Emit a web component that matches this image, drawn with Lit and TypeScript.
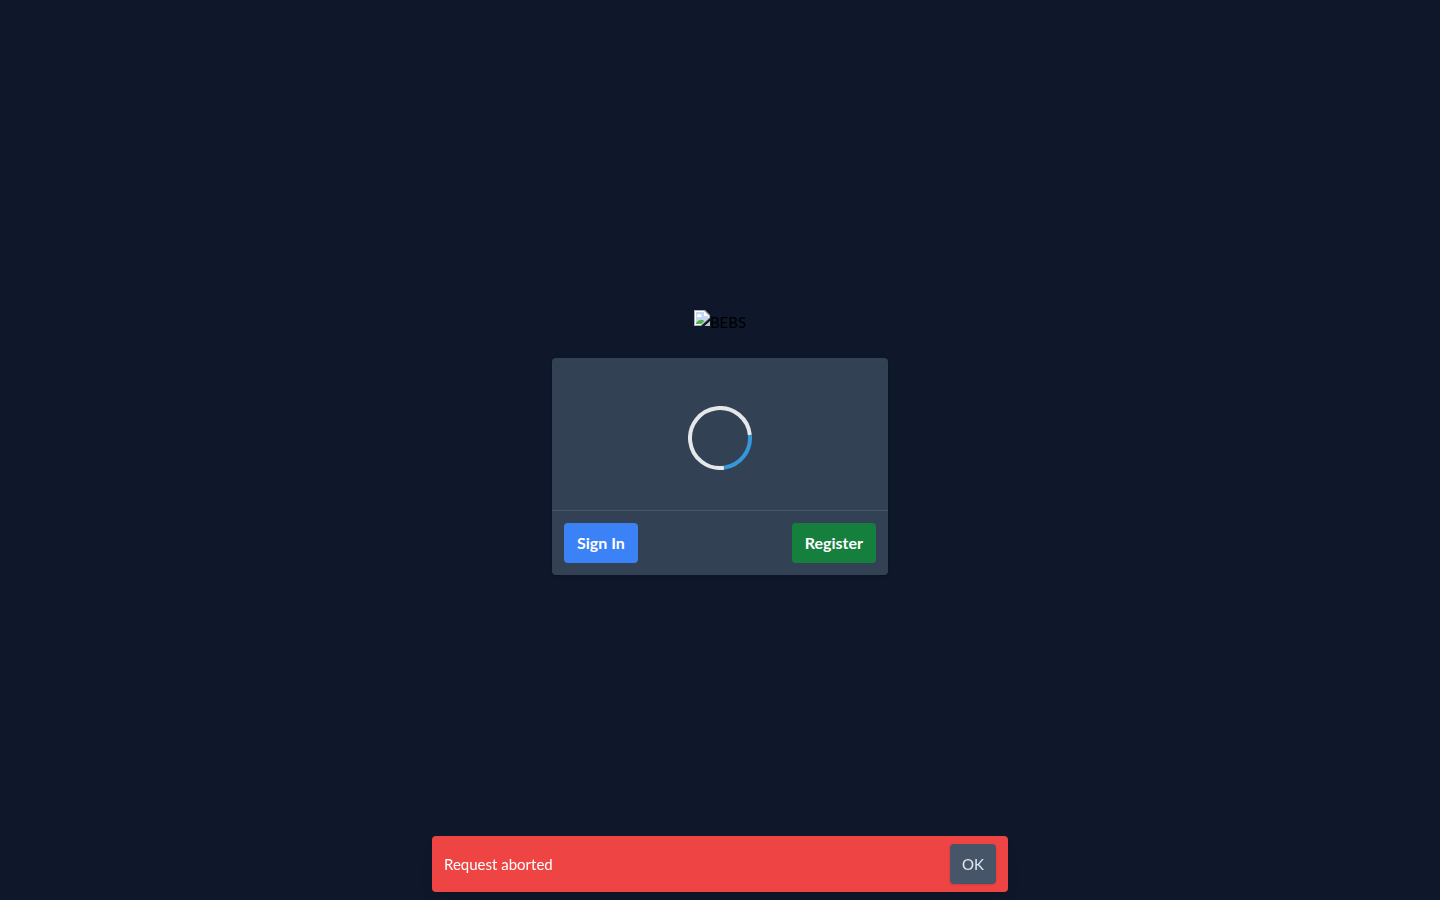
import { LitElement, html, css } from "lit";
import { customElement, state } from "lit/decorators.js";

@customElement("app-root")
export class AppRoot extends LitElement {
  @state() private notice = "Request aborted";

  static styles = css`
    :host {
      display: flex;
      flex-direction: column;
      align-items: center;
      justify-content: center;
      box-sizing: border-box;
      min-height: 100vh;
      padding: 8px 8px 23px;
      background: #0f172a;
      color: #000;
      font: 15px/24px Lato, "Liberation Sans", sans-serif;
    }
    .logo {
      display: flex;
      align-items: flex-start;
      margin-bottom: 24px;
    }
    .logo svg {
      display: block;
      flex: none;
    }
    .card {
      width: 336px;
      max-width: 100%;
      border-radius: 4px;
      background: #334155;
      box-shadow: 0 1px 3px rgb(0 0 0 / 0.1), 0 1px 2px -1px rgb(0 0 0 / 0.1);
    }
    .loading {
      display: flex;
      justify-content: center;
      padding: 48px 12px 40px;
    }
    .loading svg {
      display: block;
    }
    .actions {
      display: flex;
      justify-content: space-between;
      padding: 12px;
      border-top: 1px solid #475569;
    }
    button {
      border: 0;
      border-radius: 4px;
      padding: 8px 12px;
      color: #fff;
      font: inherit;
      cursor: pointer;
    }
    .sign-in,
    .register {
      padding: 8px 13px;
      font-size: 16px;
      font-weight: 700;
    }
    .sign-in {
      background: #3b82f6;
    }
    .register {
      background: #15803d;
    }
    .toast {
      position: fixed;
      bottom: 8px;
      left: 30%;
      right: 30%;
      display: flex;
      align-items: center;
      justify-content: space-between;
      padding: 8px 12px;
      border-radius: 4px;
      background: #ef4444;
      color: #fff;
      box-shadow: 0 10px 15px -3px rgb(0 0 0 / 0.1), 0 4px 6px -4px rgb(0 0 0 / 0.1);
    }
    .dismiss {
      background: #475569;
      color: #e2e8f0;
      box-shadow: 0 1px 3px rgb(0 0 0 / 0.1), 0 1px 2px -1px rgb(0 0 0 / 0.1);
    }
  `;

  render() {
    return html`
      <div class="logo">
        <svg width="16" height="16" viewBox="0 0 16 16" aria-hidden="true">
          <path d="M0 0H11L16 5V8L7 16H0Z" fill="#a9adb2" />
          <path d="M1 1H10V6H15V7.500L6.500 15H1Z" fill="#fff" />
          <path d="M2 2H10V6H14V8.500L7 14H2Z" fill="#c5d7f5" />
          <path d="M3 7a1.500 1.500 0 0 1 .500-2a2 2 0 0 1 3.500 0a1.500 1.500 0 0 1 .500 2Z" fill="#fff" />
          <path d="M2 14V13Q6 7.500 10.500 11L7 14Z" fill="#52b043" />
          <path d="M10 1L15 6H10Z" fill="#fff" />
          <path d="M16 11V16H10.500Z" fill="#c3c6ca" />
        </svg>
        <span>BEBS</span>
      </div>
      <main class="card">
        <div class="loading" role="status" aria-label="Loading">
          <svg width="64" height="64" viewBox="0 0 64 64" fill="none" stroke-width="4">
            <path d="M36 61.730A30 30 0 1 1 61.850 29" stroke="#e5e7eb" />
            <path d="M61.850 29A30 30 0 0 1 36 61.730" stroke="#3498db" />
          </svg>
        </div>
        <div class="actions">
          <button class="sign-in" type="button">Sign In</button>
          <button class="register" type="button">Register</button>
        </div>
      </main>
      ${this.notice
        ? html`<div class="toast" role="alert">
            <span>${this.notice}</span>
            <button class="dismiss" type="button" @click=${() => (this.notice = "")}>OK</button>
          </div>`
        : null}
    `;
  }
}
